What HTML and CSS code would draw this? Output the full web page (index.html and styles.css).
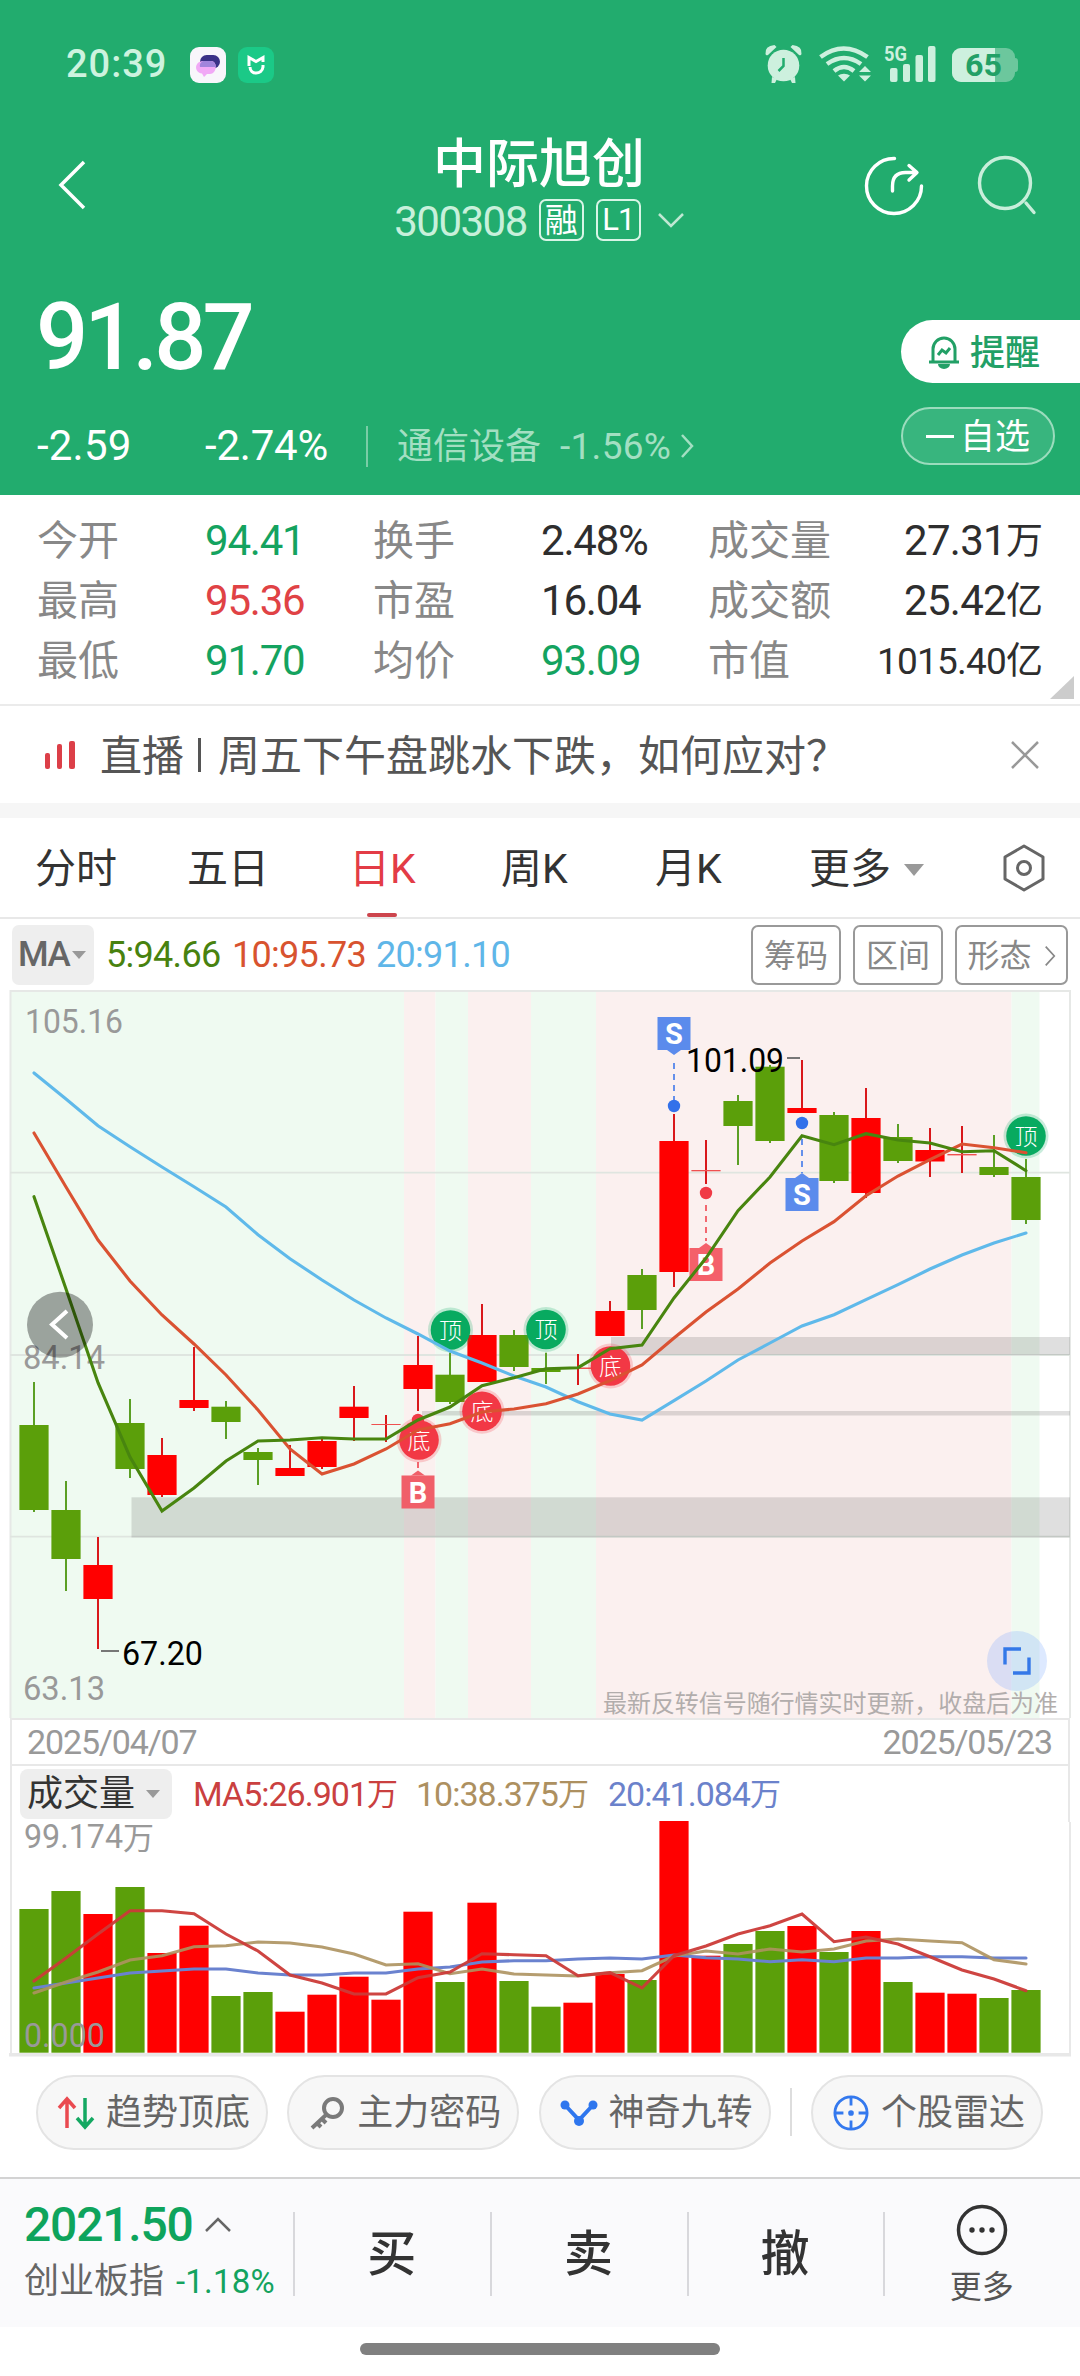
FILE: index.html
```html
<!DOCTYPE html>
<html lang="zh-CN">
<head>
<meta charset="utf-8">
<title>中际旭创 300308</title>
<link rel="stylesheet" href="styles.css">
</head>
<body>
<header class="hero">
  <div class="status">
    <span class="clock">20:39</span>
    <svg class="app" viewBox="0 0 36 36"><rect width="36" height="36" rx="9" fill="#f8f6fb"/><rect x="10" y="8" width="20" height="13.500" rx="6.700" fill="#3a3187"/><path d="M13 14h8c7 0 6 13-1 13h-3l-3 3-2-3.500c-8-1-8-12 1-12.500z" fill="#f1a9f6"/><path d="M13 14h8q4 0 5 6H10q-1-4 3-6z" fill="#a184dc"/></svg>
    <svg class="app second" viewBox="0 0 36 36"><rect width="36" height="36" rx="9" fill="#1bc987"/><path d="M11 19v-8.500l7 4 7-4V15M12 20c0 8 12 8 13 0v-2" fill="none" stroke="#fff" stroke-width="3"/></svg>
    <span class="grow"></span>
    <svg class="status-icons" viewBox="760 40 262 48">
      <g fill="#cdf0de">
        <circle cx="783.500" cy="65.500" r="15.800"/>
        <path d="M765.500 54q-1-8 9-9l2 2-8.500 8q-2 1-2.500-1zM801.500 54q1-8-9-9l-2 2 8.500 8q2 1 2.500-1zM772 77l5 2-2 4h-3.500zM795 77l-5 2 2 4h3.500z"/>
        <path d="M844 81.500l-6-6a8 5 0 0 1 12 0z"/>
        <path d="M859 72l6-6 6 6zM859 75.500h12l-6 6z"/>
        <rect x="890" y="68" width="7.500" height="14" rx="2"/><rect x="903" y="64" width="7" height="18" rx="2"/><rect x="915.500" y="55" width="7.500" height="27" rx="2"/><rect x="928" y="46" width="7.500" height="36" rx="2"/>
      </g>
      <path d="M783.500 58v8l-5 5" fill="none" stroke="#22ac6e" stroke-width="2.500"/>
      <path d="M820.500 57q23-17 47 0M827 64q17-12 34 0M834 71q10-8 20 0" fill="none" stroke="#cdf0de" stroke-width="4.500"/>
      <text x="884" y="61" class="net" textLength="23" lengthAdjust="spacingAndGlyphs">5G</text>
      <rect x="1012" y="58" width="6" height="14" rx="3" fill="#6cc79d"/>
      <rect x="952" y="48" width="63" height="34" rx="9" fill="#6cc79d"/>
      <path d="M961 48h34v34h-34a9 9 0 0 1-9-9v-16a9 9 0 0 1 9-9z" fill="#cdf0de"/>
      <text x="965" y="76" class="batt" textLength="37" lengthAdjust="spacingAndGlyphs">65</text>
    </svg>
  </div>
  <div class="titlebar">
    <svg class="back" viewBox="0 0 32 52"><path d="M28 3L5 26l23 23" fill="none" stroke="#fff" stroke-width="3.500"/></svg>
    <div class="title">
      <h1>中际旭创</h1>
      <div class="code"><span class="digits">300308</span><span class="tag">融</span><span class="tag l1">L1</span><svg viewBox="0 0 26 16"><path d="M1 2l12 12 12-12" fill="none" stroke="#bfe8d3" stroke-width="2.500"/></svg></div>
    </div>
    <svg class="actions" viewBox="860 150 180 70" fill="none" stroke-width="3.400" stroke-linecap="round">
      <path d="M894.500 158.500a27.500 27.500 0 1 0 27 27.500M892.500 191v-5q0-13.500 13-13.500h10M909 165.500l8 7-8 7.500" stroke="#fff" stroke-linejoin="round"/>
      <circle cx="1005" cy="183" r="25.500" stroke="#c8eeda"/><path d="M1026 203l8 9.500" stroke="#c8eeda"/>
    </svg>
  </div>
  <div class="quote">
    <div class="price">91.87</div>
    <button class="remind"><svg viewBox="0 0 32 36" fill="none" stroke="#22a066" stroke-width="3"><path d="M5 28V15a11 11 0 0 1 22 0v13M1 28h30M10 21l4-5 4 3 4-5"/><path d="M10 30a6 5 0 0 0 12 0z" fill="#22a066" stroke="none"/></svg><span>提醒</span></button>
  </div>
  <div class="change">
    <span class="num diff">-2.59</span><span class="num pct">-2.74%</span><i class="sep"></i>
    <span class="sector">通信设备</span><span class="num sector-pct">-1.56%</span>
    <svg viewBox="0 0 14 24"><path d="M2 1l10 11L2 23" fill="none" stroke="#a3dfc2" stroke-width="2.500"/></svg>
    <span class="grow"></span>
    <button class="fav"><i></i><span>自选</span></button>
  </div>
</header>

<section class="stats">
  <span>今开</span><b class="up-g">94.41</b><span>换手</span><b>2.48%</b><span>成交量</span><b class="end">27.31<em>万</em></b>
  <span>最高</span><b class="up-r">95.36</b><span>市盈</span><b>16.04</b><span>成交额</span><b class="end">25.42<em>亿</em></b>
  <span>最低</span><b class="up-g">91.70</b><span>均价</span><b class="up-g">93.09</b><span>市值</span><b class="end small">1015.40<em>亿</em></b>
  <i class="corner"></i>
</section>

<section class="news">
  <svg class="live" viewBox="0 0 30 28" fill="#dc3f48"><rect y="12" width="5" height="16" rx="2"/><rect x="12" y="3" width="5" height="25" rx="2"/><rect x="24" width="6" height="28" rx="2"/></svg>
  <span>直播</span><i></i><span>周五下午盘跳水下跌，如何应对？</span>
  <svg class="close" viewBox="0 0 28 28"><path d="M1 1l26 26M27 1L1 27" stroke="#999" stroke-width="2.500"/></svg>
</section>

<nav class="tabs">
  <span>分时</span><span>五日</span><span class="on">日K</span><span>周K</span><span>月K</span><span>更多<i class="tri"></i></span>
  <svg viewBox="0 0 44 48" fill="none" stroke="#666" stroke-width="3"><path d="M22 2l19 11v22L22 46 3 35V13z" stroke-linejoin="round"/><circle cx="22" cy="24" r="6.500"/></svg>
</nav>

<div class="ma">
  <span class="ma-pick">MA<i class="tri"></i></span>
  <span class="m5">5:94.66</span><span class="m10">10:95.73</span><span class="m20">20:91.10</span>
  <span class="grow"></span>
  <span class="btn">筹码</span><span class="btn">区间</span><span class="btn wide">形态<svg viewBox="0 0 14 24"><path d="M2 1l10 11L2 23" fill="none" stroke="#888" stroke-width="2"/></svg></span>
</div>

<section class="chart">
  <svg class="price-plot" id="price" viewBox="0 990 1080 728"></svg>
  <div class="dates"><span>2025/04/07</span><span>2025/05/23</span></div>
  <div class="vol-head">
    <span class="vol-pick">成交量<i class="tri"></i></span>
    <span class="v5">MA5:26.901<em>万</em></span><span class="v10">10:38.375<em>万</em></span><span class="v20">20:41.084<em>万</em></span>
  </div>
  <svg class="vol-plot" id="volume" viewBox="0 1822 1080 232"></svg>
</section>

<section class="chips">
  <span class="chip"><svg viewBox="0 0 38 34" fill="none" stroke-width="3.500"><path d="M10 32V3M2 12l8-9 8 9" stroke="#ea4a50"/><path d="M28 2v29M20 22l8 9 8-9" stroke="#14a862"/></svg>趋势顶底</span>
  <span class="chip"><svg viewBox="0 0 38 34" fill="none" stroke="#7a7a7a" stroke-width="4"><circle cx="25" cy="12" r="9"/><path d="M19 18L4 32M8 26l5 5M13 22l5 5"/></svg>主力密码</span>
  <span class="chip"><svg viewBox="0 0 38 34"><path d="M5 9l14 15L33 9" fill="none" stroke="#2e76ee" stroke-width="4"/><g fill="#2e76ee"><circle cx="5" cy="9" r="4.500"/><circle cx="19" cy="25" r="5"/><circle cx="33" cy="9" r="4.500"/></g></svg>神奇九转</span>
  <i></i>
  <span class="chip"><svg viewBox="0 0 38 38" fill="none" stroke="#3479ee" stroke-width="3"><circle cx="19" cy="19" r="17"/><path d="M19 2v9M19 27v9M2 19h9M27 19h9"/><circle cx="19" cy="19" r="3" fill="#3479ee" stroke="none"/></svg>个股雷达</span>
</section>

<footer class="bar">
  <div class="index">
    <div class="index-top">2021.50<svg viewBox="0 0 26 16"><path d="M1 14L13 2l12 12" fill="none" stroke="#666" stroke-width="2.500"/></svg></div>
    <div class="index-sub"><span>创业板指</span><b>-1.18%</b></div>
  </div>
  <div class="act">买</div><div class="act">卖</div><div class="act">撤</div>
  <div class="act more"><svg viewBox="0 0 52 52"><circle cx="26" cy="26" r="23.500" fill="none" stroke="#333" stroke-width="3.500"/><g fill="#333"><circle cx="16" cy="26" r="2.700"/><circle cx="26" cy="26" r="2.700"/><circle cx="36" cy="26" r="2.700"/></g></svg><span>更多</span></div>
</footer>
<div class="home"><i></i></div>
<script src="chart.js"></script>
</body>
</html>
```
FILE: styles.css
```css
* { box-sizing: border-box; }
body { margin: 0; width: 1080px; background: #fff; font-family: Roboto, "Noto Sans CJK SC", sans-serif; line-height: 1; color: #333; }
svg { display: block; flex: none; overflow: visible; }
i, em { font-style: normal; display: block; }
h1, b { font-weight: 400; margin: 0; }
button { font: inherit; border: 0; padding: 0; }
.grow { flex: 1; }
.tri { width: 0; height: 0; border: 10px solid transparent; border-top: 12px solid #999; border-bottom: 0; flex: none; }

.hero { height: 495px; background: #22ac6e; color: #fff; display: flex; flex-direction: column; }
.status { height: 88px; padding: 40px 58px 0 66px; display: flex; align-items: center; flex: none; }
.clock { font-size: 38px; font-weight: 500; color: #cdf3df; width: 124px; letter-spacing: 1px; }
.app { width: 36px; height: 36px; margin-top: 2px; }
.second { margin-left: 12px; }
.status-icons { width: 262px; height: 48px; }
.net { font-size: 20px; font-weight: 700; fill: #cdf0de; }
.batt { font-size: 31px; font-weight: 700; fill: #22a066; }
.titlebar { height: 192px; display: flex; padding: 0 40px 0 56px; flex: none; }
.back { width: 32px; height: 52px; margin-top: 71px; }
.title { margin-top: 47px; width: 772px; padding-left: 130px; display: flex; flex-direction: column; align-items: center; }
.title h1 { font-size: 53px; font-weight: 500; line-height: 60px; }
.code { display: flex; align-items: center; margin-top: 3px; height: 44px; }
.digits { font-size: 42px; letter-spacing: -1.500px; color: #c8f0db; margin-right: 12px; padding-top: 4px; }
.tag { width: 45px; height: 42px; border: 2px solid #d8f5e6; border-radius: 7px; font-size: 33px; line-height: 40px; text-align: center; margin-right: 12px; }
.l1 { font-size: 31px; letter-spacing: -1px; line-height: 38px; }
.code svg { width: 26px; height: 16px; margin-left: 5px; }
.actions { width: 180px; height: 70px; margin-top: 62px; }
.quote { height: 124px; display: flex; justify-content: space-between; padding-left: 36px; flex: none; }
.price { font-size: 92px; font-weight: 500; letter-spacing: -4px; line-height: 110px; padding-top: 3px; }
.remind { width: 179px; height: 63px; margin-top: 40px; border-radius: 32px 0 0 32px; background: #fff; color: #22a066; font-size: 35px; font-weight: 500; display: flex; align-items: center; padding-left: 27px; gap: 10px; }
.remind span, .fav span { padding-top: 3px; }
.remind svg { width: 32px; height: 36px; }
.change { height: 84px; display: flex; align-items: center; padding: 0 25px 0 37px; font-size: 42px; flex: none; }
.num { letter-spacing: .2px; }
.diff { width: 168px; }
.pct { width: 161px; letter-spacing: -.2px; }
.sep { width: 2px; height: 41px; background: #7acda6; margin-right: 29px; }
.sector { font-size: 36px; color: #a3dfc2; width: 163px; padding-top: 2px; }
.sector-pct { font-size: 37px; letter-spacing: .3px; color: #a3dfc2; margin-right: 9px; }
.change svg { width: 14px; height: 24px; }
.fav { width: 154px; height: 58px; margin-top: -20px; border: 2px solid #9bdcbd; border-radius: 29px; background: #38b57e; color: #fff; font-size: 35px; display: flex; align-items: center; justify-content: center; gap: 6px; }
.fav i { width: 28px; height: 3px; background: #fff; }

.stats { height: 211px; padding: 16px 37px 0; border-bottom: 2px solid #ebebeb; display: grid; grid-template-columns: 168px 168px 168px 167px 140px 1fr; grid-template-rows: 60px 60px 60px; align-items: center; position: relative; }
.stats span { font-size: 41px; color: #888; }
.stats b { font-size: 42px; letter-spacing: -1.200px; color: #2e2e2e; }
.stats .up-g { color: #14a35f; }
.stats .up-r { color: #e04245; }
.stats .end { justify-self: end; display: flex; letter-spacing: -.700px; }
.stats em { font-size: 37px; letter-spacing: 0; align-self: center; }
.stats .small { font-size: 37px; letter-spacing: -.800px; }
.corner { position: absolute; right: 6px; bottom: 5px; border-left: 24px solid transparent; border-bottom: 23px solid #ccc; }

.news { height: 97px; padding: 0 41px 0 45px; display: flex; align-items: center; font-size: 42px; color: #555; }
.news span { padding-top: 4px; }
.live { width: 30px; height: 28px; margin-right: 25px; }
.news > i { width: 3px; height: 34px; background: #555; margin: 0 17px 0 14px; }
.close { width: 28px; height: 28px; margin-left: auto; }
.tabs { height: 116px; border-top: 15px solid #f6f6f6; border-bottom: 2px solid #e8e8e8; padding: 0 35px; display: grid; grid-template-columns: 152px 162px 152px 154px 154px 193px 44px; align-items: center; font-size: 41px; color: #333; }
.tabs span { display: flex; align-items: center; height: 99px; padding-top: 4px; }
.tabs .tri { margin-left: 13px; }
.tabs .on { color: #e33c46; position: relative; }
.tabs .on::after { content: ""; position: absolute; left: 18px; bottom: 0; width: 30px; height: 4px; border-radius: 2px; background: #cd454d; }
.tabs svg { width: 44px; height: 48px; }

.ma { height: 71px; padding: 0 12px; display: flex; align-items: center; font-size: 36px; letter-spacing: -.700px; }
.ma-pick { width: 82px; height: 60px; background: #eee; border-radius: 7px; display: flex; align-items: center; padding-left: 6px; color: #666; font-size: 35px; letter-spacing: -1.500px; margin-right: 12px; font-weight: 500; }
.ma-pick .tri, .vol-pick .tri { border-width: 8px 7px 0; margin-left: 3px; }
.m5 { color: #48820f; width: 126px; }
.m10 { color: #d8532f; width: 144px; }
.m20 { color: #5fb6e8; }
.btn { width: 90px; height: 60px; border: 2px solid #999; border-radius: 7px; margin-left: 12px; display: flex; align-items: center; justify-content: center; font-size: 32px; color: #888; letter-spacing: 0; padding-top: 2px; }
.wide { width: 113px; gap: 12px; }
.wide svg { width: 12px; height: 24px; }

.chart { height: 1068px; }
.price-plot { width: 1080px; height: 728px; }
.dates { height: 48px; margin: 0 10px; padding: 0 16px 0 15px; border: 2px solid #e8e8e8; display: flex; justify-content: space-between; align-items: center; font-size: 34px; letter-spacing: -1.150px; color: #999; }
.vol-head { height: 56px; margin: 0 10px; padding-left: 8px; border: solid #e8e8e8; border-width: 0 2px; display: flex; align-items: center; font-size: 34px; letter-spacing: -1px; }
.vol-head > span { display: flex; align-items: center; }
.vol-head em, .vol-head .vol-pick { letter-spacing: 0; }
.vol-head em { font-size: 31px; }
.vol-head .vol-pick { width: 152px; height: 50px; border-radius: 8px; background: #eee; padding-left: 7px; font-size: 36px; margin-right: 21px; }
.vol-pick .tri { margin-left: 11px; }
.v5 { color: #ca4040; width: 223px; }
.v10 { color: #ad9060; width: 192px; }
.v20 { color: #6b82cb; }
.vol-plot { width: 1080px; height: 232px; }
.axis { font-size: 34px; }
.note { font-size: 24px; fill: #b2adac; }
.flag { font-size: 29px; font-weight: 700; fill: #fff; text-anchor: middle; }
.mark { font-size: 23px; font-weight: 300; fill: #fff; text-anchor: middle; }

.chips { height: 119px; padding: 17px 37px 0 36px; display: flex; align-items: flex-start; justify-content: space-between; font-size: 36px; color: #666; }
.chip { width: 232px; height: 75px; border: 2px solid #e4e4e4; border-radius: 38px; background: #f7f7f7; display: flex; align-items: center; justify-content: space-between; padding: 0 16px 0 19px; }
.chip svg { width: 38px; height: 36px; }
.chips > i { width: 2px; height: 48px; margin-top: 13px; background: #ddd; }
.bar { height: 150px; border-top: 2px solid #d3d3d3; background: #fafafc; display: flex; }
.index { width: 294px; padding: 24px 0 0 24px; }
.index-top { display: flex; align-items: center; gap: 12px; font-size: 48px; letter-spacing: -1.200px; color: #0ea45c; font-weight: 500; height: 44px; }
.index-top svg { width: 26px; height: 16px; }
.index-sub { display: flex; align-items: center; font-size: 35px; color: #666; margin-top: 17px; }
.index-sub b { font-size: 33px; color: #14a35f; margin-left: 12px; letter-spacing: .2px; }
.act { width: 197px; display: flex; align-items: center; justify-content: center; font-size: 49px; font-weight: 500; padding-top: 3px; background: linear-gradient(#d8d8dc, #d8d8dc) left 33px / 2px 84px no-repeat; }
.more { flex-direction: column; justify-content: flex-start; padding-top: 25px; font-size: 32px; font-weight: 400; color: #555; }
.more svg { width: 52px; height: 52px; margin-bottom: 15px; }
.home { height: 49px; padding-top: 16px; }
.home i { width: 360px; height: 12px; border-radius: 6px; background: #808080; margin: 0 auto; }
```
FILE: chart.js
```js
// Plot coordinates: one slot every 32px, y measured on the page.
const RED = '#f00', GREEN = '#5b9f0a', WICK_RED = '#d9181b', WICK_GREEN = '#5b9f25';
const x = i => 34 + 32 * i;

// colour, high, body top, body bottom, low
const candles = [
  ['g',1382,1425,1510,1512],['g',1481,1510,1559,1591],['r',1537,1565,1599,1649],['g',1399,1423,1469,1478],
  ['r',1438,1455,1495,1497],['r',1347,1400,1408,1411],['g',1401,1406.7,1422,1439],['g',1448,1452,1460,1485],
  ['r',1445,1468,1476,1476],['r',1438,1441,1467,1469],['r',1386,1406.7,1418,1441],['r',1415,1424,1425,1442],
  ['r',1336,1365,1389,1411],['g',1352.7,1374.7,1402,1404],['r',1304,1335,1382,1382],['g',1330,1335,1367,1371],
  ['g',1352.7,1368,1372,1384],['r',1354,1367.5,1369,1385],['r',1301,1311,1336,1336],['g',1269,1275,1310,1329],
  ['r',1114,1141,1272,1287],['r',1140,1170,1171.3,1184],['g',1095,1101,1126,1165],['g',1065,1066.7,1141,1143],
  ['r',1060,1108,1113,1113],['g',1112,1115,1181,1183],['r',1088,1118,1193,1198],['g',1124,1137,1161,1163],
  ['r',1128,1150,1161.5,1177],['r',1126,1154,1155.4,1173],['g',1135,1167,1175,1177],['g',1159,1177,1220,1224]
];
const ma20 = [1073,1099,1125.7,1146.7,1167,1186.7,1207,1234.7,1258.7,1280,1300,1318,1334,1351,1363,1376,1387,1401.7,1414,1420,1400.7,1381,1360,1343,1326,1314.7,1299.7,1284.7,1269,1255,1243,1233];
const ma10 = [1133,1187,1240,1281,1315,1344,1375,1410,1449,1474,1464,1449,1430,1423.7,1412,1409,1403.7,1394,1380.7,1365,1338,1312,1289,1263,1241,1221.7,1195.7,1176,1159.7,1144,1147.7,1152.7];
const ma5 = [1196.7,1289,1382.7,1457,1511,1488,1461,1441,1440,1437.7,1439,1439,1420,1407,1385.7,1377.7,1368.7,1367.7,1348.7,1345,1298,1258,1210.7,1177,1135.7,1144.7,1133.7,1140,1143,1151.7,1150.7,1170.7];
const volumes = [1909,1891,1914,1887,1953,1925.7,1996,1992,2011.7,1994.7,1976.7,1999.7,1911.7,1982,1902.7,1981,2006.7,2002.7,1974,1980,1821,1955.7,1944,1931,1926,1952,1931,1982,1992.7,1993.7,1998,1990];
const vma5 = [1981,1958,1934,1910.7,1910.7,1913.7,1934,1951,1975,1983,1994,1994,1977.7,1972,1953.7,1954.7,1955.7,1975.7,1972.7,1988,1955.7,1946,1934,1925.7,1914,1941.7,1937,1944,1956.7,1970,1979,1990.7];
const vma10 = [1993,1982,1972,1960,1955.7,1946.7,1945.7,1942,1943,1947,1954,1965,1963.7,1973.7,1969,1974,1975,1976,1972.7,1970.7,1956,1951,1954,1949,1952,1949,1941,1939,1941,1942.7,1959.7,1964];
const vma20 = [1988,1983,1978,1973,1971,1969,1969,1973,1975,1975,1973,1973,1969,1967,1962,1960.7,1960.7,1959,1958,1959,1955,1957.7,1959,1961.7,1959.7,1961.7,1958,1958,1956.7,1956.7,1958,1958];

const rect = (l, t, r, b, fill) => `<rect x="${l}" y="${t}" width="${r - l}" height="${b - t}" fill="${fill}"/>`;
const line = (ys, c, o = 1) => `<polyline points="${ys.map((y, i) => x(i) + ',' + y).join(' ')}" fill="none" stroke="${c}" stroke-width="3.1" opacity="${o}" stroke-linecap="round"/>`;
const path = (d, c, w) => `<path d="${d}" fill="none" stroke="${c}" stroke-width="${w}"/>`;
const label = (s, l, r, y, c) => `<text class="axis" x="${l - 2}" y="${y}" fill="${c}" textLength="${r - l + 4}" lengthAdjust="spacingAndGlyphs">${s}</text>`;
const mark = (s, cx, cy, c) => `<circle cx="${cx}" cy="${cy}" r="22.5" fill="${c}" opacity=".22"/><circle cx="${cx}" cy="${cy}" r="19.8" fill="${c}"/><text class="mark" x="${cx}" y="${cy + 8.5}">${s}</text>`;
// Trade flag: dot at the candle, dashed stem, box whose pointer faces the stem
const flag = (s, cx, top, dot, from, to, c, dc, down) =>
  `<path d="M${cx} ${from}V${to}" stroke="${dc}" stroke-width="2" stroke-dasharray="6 5" opacity=".75"/><circle cx="${cx}" cy="${dot}" r="6.2" fill="${dc}"/>` +
  rect(cx - 16.5, top, cx + 16.5, top + 33, c) +
  (down ? `<path d="M${cx - 7} ${top + 33}h14l-7 5z" fill="${c}"/>` : `<path d="M${cx - 7} ${top}h14l-7-5z" fill="${c}"/>`) +
  `<text class="flag" x="${cx}" y="${top + 27}">${s}</text>`;

let p = '';
const G = '#effaf1', R = '#fbf0ef';
[[11,404,G],[404,435.5,R],[435.5,468,G],[468,531,R],[531,596,G],[596,1011.5,R],[1011.5,1039.5,G]].forEach(z => p += rect(z[0], 991, z[1], 1718, z[2]));
p += path('M10.500 1718V991H1070V1718', '#e6e8e6', 2) + path('M10 1172.700H1070M10 1355H1070M10 1536.700H1070', '#dfe5e0', 1.8);
p += rect(131.5, 1497.3, 1070, 1537.5, 'rgba(0,0,0,.125)') + rect(611, 1337, 1070, 1355, 'rgba(0,0,0,.125)') + rect(422, 1411, 1070, 1415.5, 'rgba(0,0,0,.125)');
p += label('105.16', 27, 121, 1032.7, '#999') + label('84.14', 25, 103, 1368.7, '#999') + label('63.13', 25, 103, 1699.7, '#999');
candles.forEach(([c, hi, t, b, lo], i) => {
  p += rect(x(i) - 1, hi, x(i) + 1, lo, c === 'r' ? WICK_RED : WICK_GREEN);
  p += rect(x(i) - 14.6, t, x(i) + 14.6, b, c === 'r' ? (b - t < 2 ? '#ef5050' : RED) : GREEN);
});
p += flag('S', 674, 1017, 1106, 1063, 1100, '#5b8bec', '#3371ea', true);
p += flag('S', 802, 1178, 1123, 1139, 1173, '#5b8bec', '#3371ea', false);
p += flag('B', 706, 1248, 1193, 1205, 1241, '#f4606a', '#f03a45', false);
p += flag('B', 418, 1475.5, 1420, 1462, 1468, '#f05f69', '#f03a45', false);
[[450.5,1330],[546,1329.5],[1026,1136]].forEach(m => p += mark('顶', m[0], m[1], '#08aa60'));
[[419,1440],[482,1411.3],[610.5,1366]].forEach(m => p += mark('底', m[0], m[1], '#f23845'));
p += line(ma20, '#5fb9ea') + line(ma10, '#da5232') + line(ma5, '#48850f');
p += path('M787 1058h13M101 1651h18', '#777', 2) + label('101.09', 688, 782, 1072, '#000') + label('67.20', 124, 201, 1664.5, '#000');
p += '<circle cx="60" cy="1324.7" r="33" fill="#000" opacity=".35"/>' + path('M67 1311L52 1324.500L67 1338', '#fff', 4);
p += '<text class="note" x="603" y="1712" textLength="455">最新反转信号随行情实时更新，收盘后为准</text>';
p += '<circle cx="1017" cy="1661" r="30" fill="#6fa4ff" opacity=".24"/>' + path('M1005 1664.500V1649H1021M1029 1657.500V1673H1013', '#3478e8', 3.4);
document.getElementById('price').innerHTML = p;

let v = path('M11 1822V2054M1070 1822V2054', '#e8e8e8', 2) + rect(9, 2053, 1071, 2056.5, '#e8e8e8');
v += label('99.174', 26, 121, 1848, '#999') + '<text x="123" y="1849" font-size="31" fill="#999">万</text>';
volumes.forEach((t, i) => v += rect(x(i) - 14.6, t, x(i) + 14.6, 2052.7, candles[i][0] === 'r' ? RED : GREEN));
v += line(vma20, '#6a82cf') + line(vma10, '#ad925f', .9) + line(vma5, '#cb3b38', .95) + label('0.000', 26, 103, 2047, '#999');
document.getElementById('volume').innerHTML = v;
```
